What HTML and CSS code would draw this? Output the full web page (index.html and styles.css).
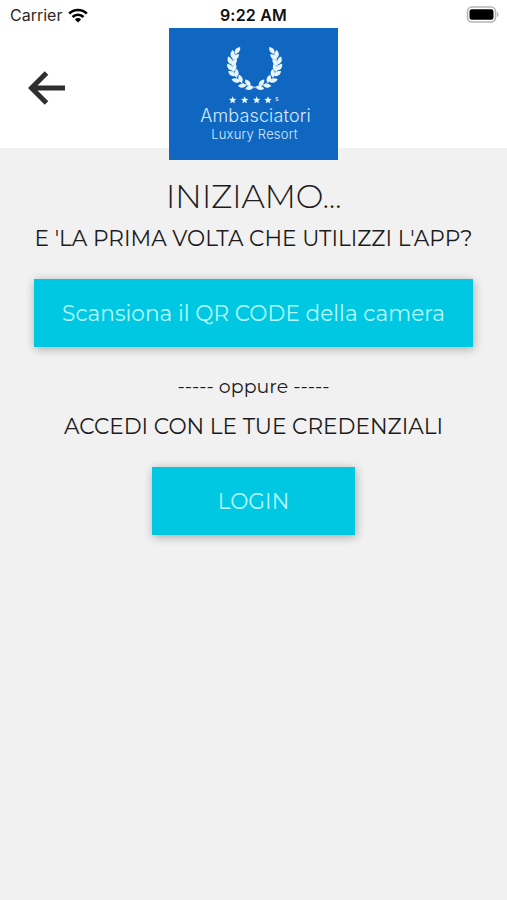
FILE: index.html
```
<!DOCTYPE html>
<html lang="it">
<head>
  <meta charset="UTF-8">
  <meta name="viewport" content="width=device-width, initial-scale=1.0">
  <title>Ambasciatori Luxury Resort</title>
  <link rel="stylesheet" href="styles.css">
</head>
<body>
  <div class="app">
    <!-- Status bar -->
    <div class="status-bar">
      <div class="carrier">
        <span>Carrier</span>
        <svg class="wifi" viewBox="0 0 20 15">
          <path d="M1.2 5.6a12.6 12.6 0 0 1 17.6 0M4.5 9a7.8 7.8 0 0 1 11 0" fill="none" stroke="#000" stroke-width="2.7"/>
          <path d="M6.9 11.4a4.4 4.4 0 0 1 6.2 0L10 14.6z"/>
        </svg>
      </div>
      <div class="time">9:22 AM</div>
      <div class="power">
        <svg class="battery" viewBox="0 0 33 18">
          <rect x="1.5" y="1" width="28" height="15" rx="4.5" fill="#fff" stroke="#b5b5b5" stroke-width="1.6"/>
          <rect x="3.5" y="3.2" width="24" height="10.6" rx="2.3"/>
          <path d="M31.4 6.5q1.4 2 0 4z" fill="#b5b5b5" stroke="#b5b5b5"/>
        </svg>
      </div>
    </div>

    <!-- Header -->
    <header class="header">
      <button class="back" aria-label="Indietro">
        <svg viewBox="0 0 38 34">
          <path d="M37 17H4M18.5 2L3.5 17l15 15" fill="none" stroke="#2f2f2f" stroke-width="5"/>
        </svg>
      </button>
      <div class="logo">
        <svg class="wreath" viewBox="60 25 180 180">
          <defs>
            <path id="leaf" d="M0 0C-9 -6 -8 -18 0 -25C8 -18 9 -6 0 0z"/>
            <path id="star" d="M0 -11L3 -3.7L11 -3L5 2L6.8 10L0 5.7L-6.8 10L-5 2L-11 -3L-3 -3.7z"/>
            <g id="branch">
              <path d="M156 158Q146 152 132 150Q104 146 88 115Q72 84 93 50" fill="none" stroke="#d9ecff" stroke-width="1.8"/>
              <use href="#leaf" transform="translate(90 54) rotate(38)"/>
              <use href="#leaf" transform="translate(83 68) rotate(0)"/>
              <use href="#leaf" transform="translate(83 72) rotate(50)"/>
              <use href="#leaf" transform="translate(79 86) rotate(-22)"/>
              <use href="#leaf" transform="translate(80 90) rotate(38)"/>
              <use href="#leaf" transform="translate(82 104) rotate(-38)"/>
              <use href="#leaf" transform="translate(83 108) rotate(22)"/>
              <use href="#leaf" transform="translate(90 121) rotate(-54)"/>
              <use href="#leaf" transform="translate(94 125) rotate(3)"/>
              <use href="#leaf" transform="translate(104 138) rotate(-74)"/>
              <use href="#leaf" transform="translate(110 141) rotate(-17)"/>
              <use href="#leaf" transform="translate(124 149) rotate(-94)"/>
              <use href="#leaf" transform="translate(136 151) rotate(-38)"/>
              <use href="#leaf" transform="translate(145 154) rotate(-102)"/>
            </g>
          </defs>
          <g fill="#e9f5ff">
            <use href="#branch"/>
            <use href="#branch" transform="translate(298 0) scale(-1 1)"/>
            <use href="#star" x="83" y="193"/>
            <use href="#star" x="119" y="193"/>
            <use href="#star" x="155" y="193"/>
            <use href="#star" x="189" y="193"/>
            <text class="superior" x="211" y="195">S</text>
          </g>
        </svg>
        <div class="brand">Ambasciatori</div>
        <div class="tagline">Luxury Resort</div>
      </div>
    </header>

    <!-- Access options -->
    <main class="content">
      <h1 class="title">INIZIAMO...</h1>
      <p class="question">E 'LA PRIMA VOLTA CHE UTILIZZI L'APP?</p>
      <button class="btn btn-scan">Scansiona il QR CODE della camera</button>
      <p class="separator"><span class="dashes">-----</span> oppure <span class="dashes">-----</span></p>
      <p class="credentials">ACCEDI CON LE TUE CREDENZIALI</p>
      <button class="btn btn-login">LOGIN</button>
    </main>
  </div>
</body>
</html>
```
FILE: styles.css
```
* {
  box-sizing: border-box;
}

body {
  margin: 0;
  background-color: #f1f1f1;
  color: #1c1c1c;
  font-family: Montserrat, Inter, sans-serif;
}

.app {
  height: 900px;
  overflow: hidden;
}

.status-bar {
  display: grid;
  grid-template-columns: 1fr auto 1fr;
  align-items: center;
  height: 28px;
  padding: 2px 8px 0 10px;
  background-color: #fff;
  font-family: Inter, sans-serif;
  font-size: 16px;
}

.carrier {
  display: flex;
  align-items: center;
  gap: 6px;
  color: #2a2a2a;
}

.wifi {
  width: 20px;
  height: 15px;
}

.time {
  margin-right: 2px;
  color: #111;
  font-weight: 600;
  letter-spacing: 0.2px;
}

.power {
  display: flex;
  justify-content: flex-end;
}

.battery {
  width: 33px;
  height: 18px;
}

.header {
  display: grid;
  grid-template-columns: 1fr 169px 1fr;
  align-items: start;
  height: 120px;
  background-color: #fff;
}

.back {
  width: 38px;
  height: 34px;
  margin: 43px 0 0 28px;
  padding: 0;
  border: none;
  background: none;
}

.back svg {
  display: block;
}

.logo {
  display: flex;
  flex-direction: column;
  align-items: center;
  height: 132px;
  padding-top: 15px;
  background-color: #1067c1;
  color: #d6eaff;
  font-family: Inter, "Liberation Sans", sans-serif;
  font-weight: 300;
  white-space: nowrap;
}

.wreath {
  width: 60px;
  height: 62px;
  margin-left: 3px;
}

.superior {
  font-size: 15px;
  font-weight: 600;
}

.brand {
  margin-left: 4px;
  font-size: 18px;
  line-height: 21px;
  letter-spacing: 0.15px;
}

.tagline {
  margin-left: 2px;
  font-size: 13px;
  line-height: 17px;
  letter-spacing: 0.2px;
}

.content {
  display: flex;
  flex-direction: column;
  align-items: center;
  padding-top: 27px;
  white-space: nowrap;
}

.title {
  margin: 0;
  font-size: 33px;
  font-weight: 300;
  line-height: 42px;
  letter-spacing: -0.3px;
}

.question {
  margin: 7px 0 0;
  font-size: 21.65px;
  line-height: 28px;
}

.btn {
  height: 68px;
  padding: 0;
  border: none;
  background-color: #00c7e2;
  box-shadow: 1px 2px 9px rgba(0, 0, 0, 0.3);
  color: #b4fbff;
  font-family: inherit;
  font-size: 21.65px;
}

.btn-scan {
  width: 439px;
  margin-top: 27px;
}

.separator {
  margin: 27px 0 0;
  font-size: 19px;
  line-height: 26px;
}

.credentials {
  margin: 12px 0 0;
  font-size: 21.65px;
  line-height: 28px;
}

.btn-login {
  width: 203px;
  margin-top: 27px;
}
```
